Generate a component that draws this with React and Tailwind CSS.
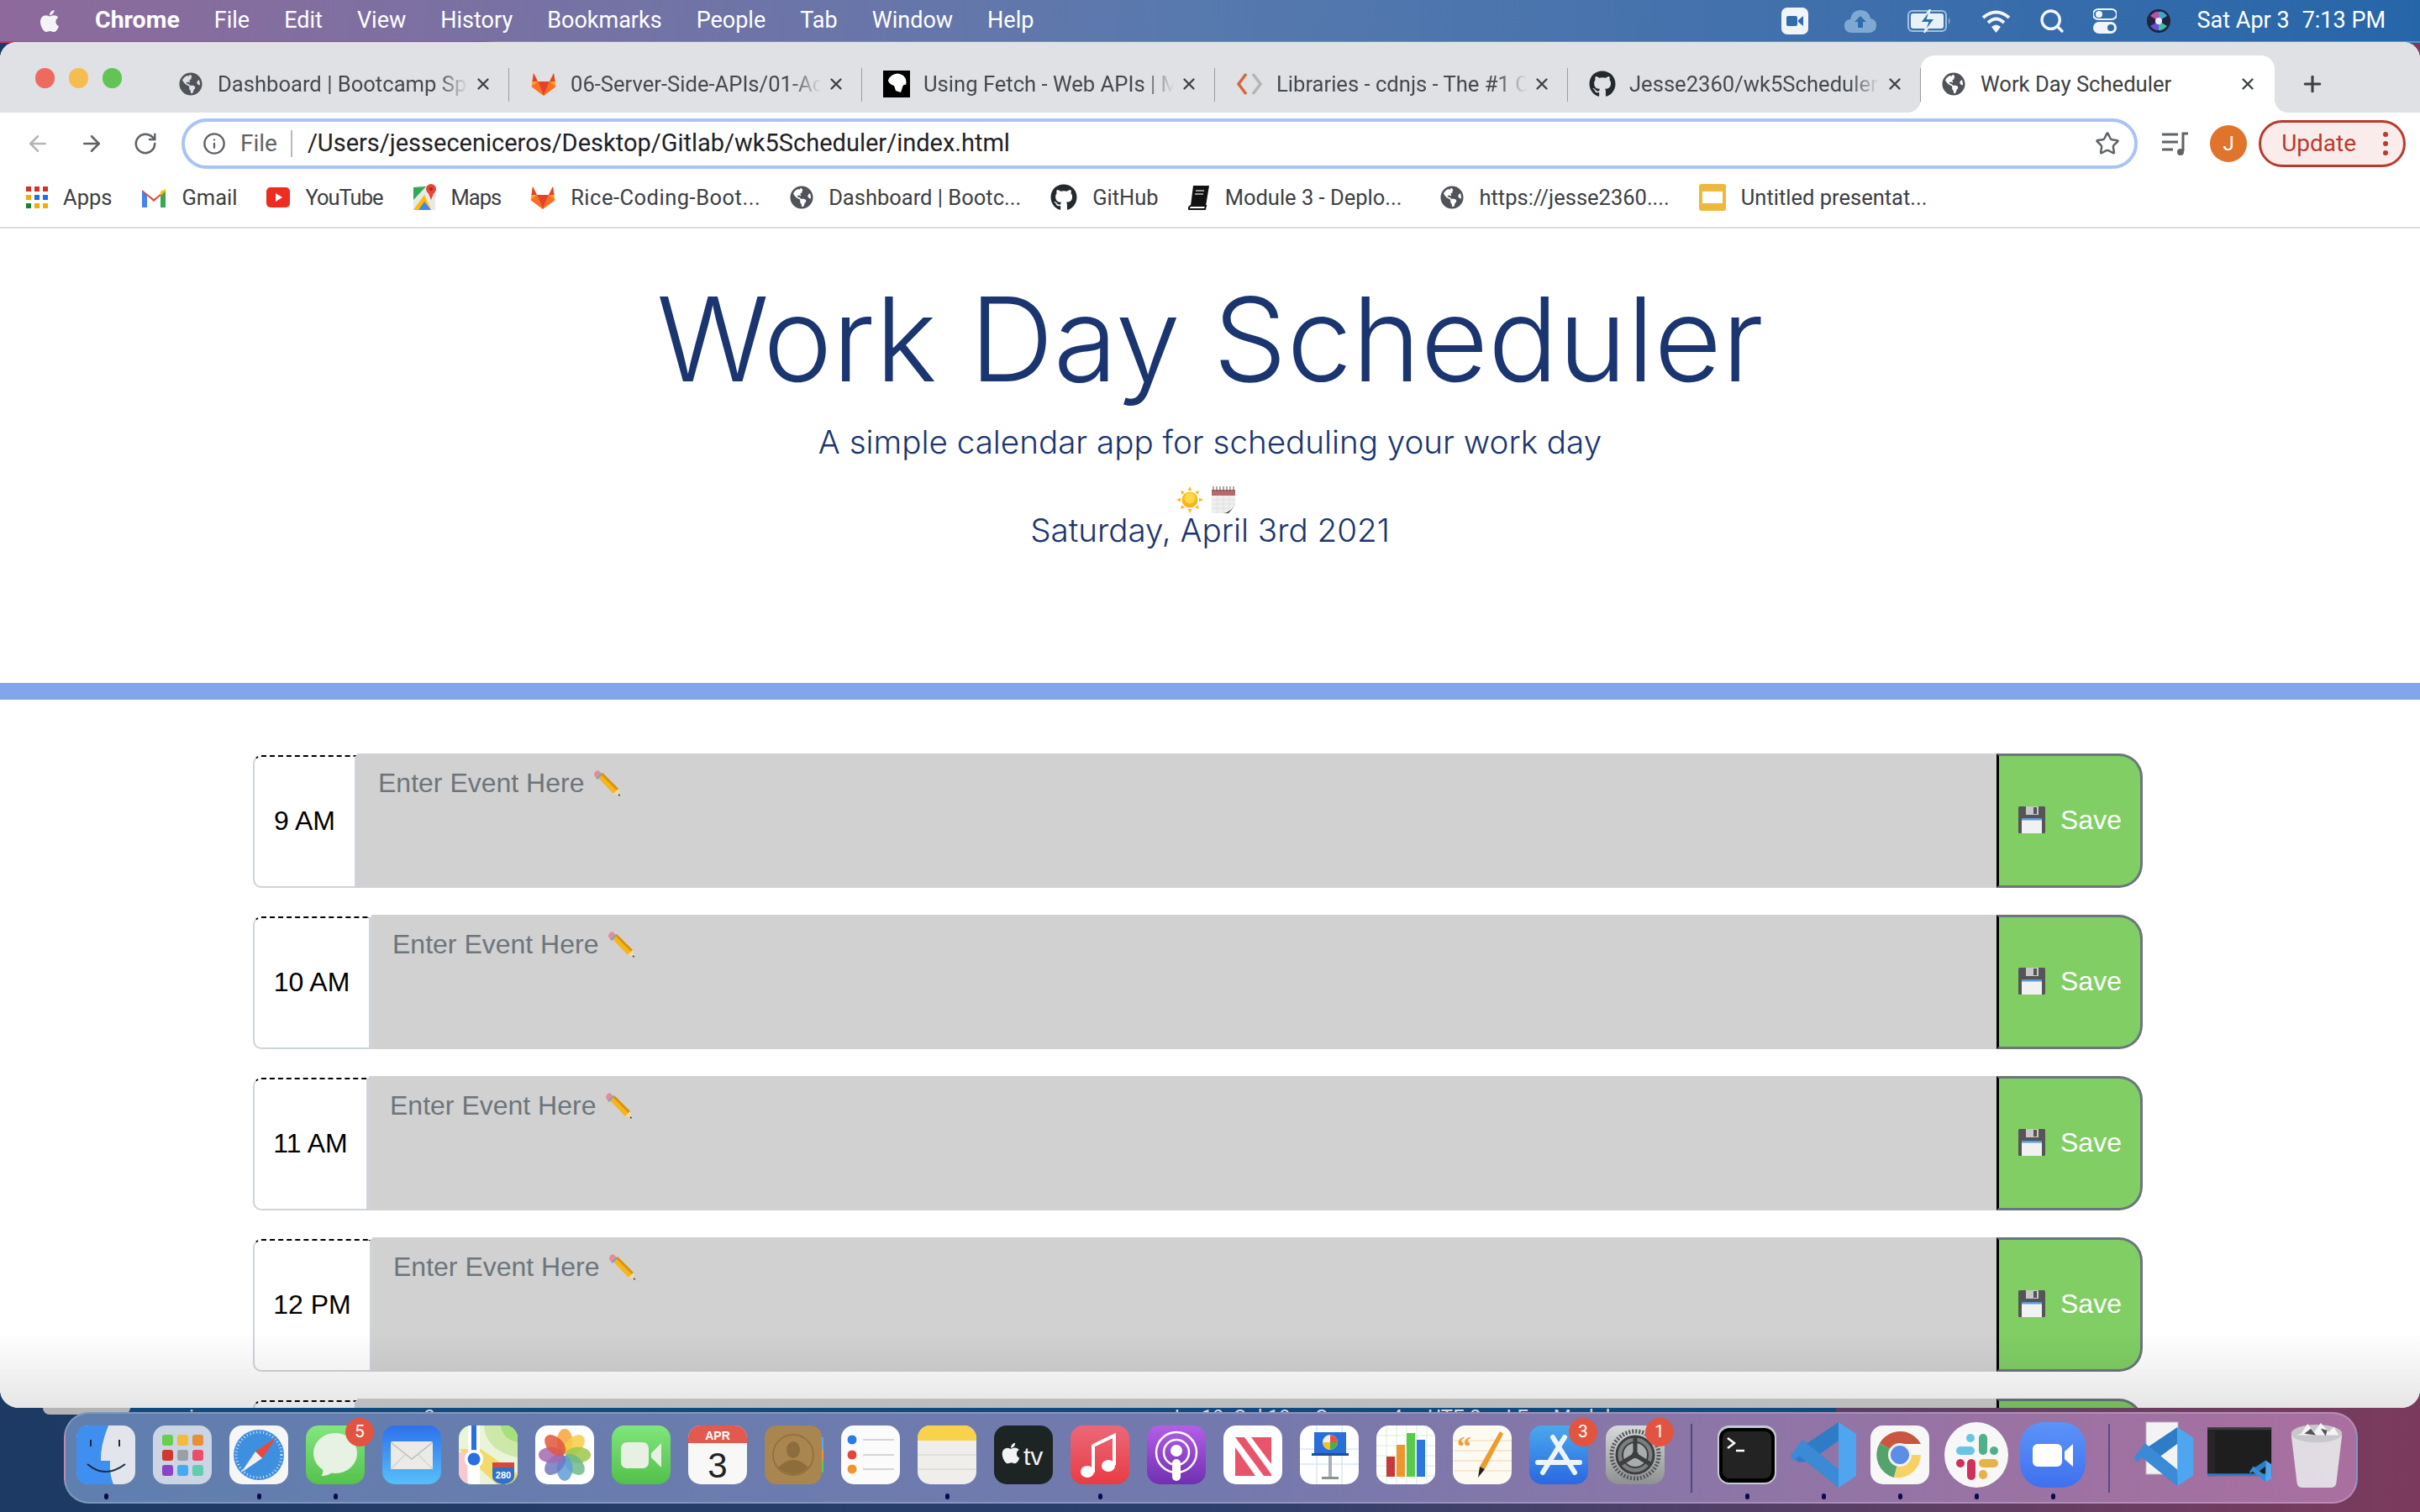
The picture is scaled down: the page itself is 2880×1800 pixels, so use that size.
import React from 'react'
import { FaApple, FaGithub, FaGlobeAmericas } from 'react-icons/fa'
import { ArrowLeft, ArrowRight, RotateCw, Info, Star, X, Plus, Search } from 'lucide-react'

const ui = { fontFamily: 'Roboto, "Liberation Sans", sans-serif' }
const light = { fontFamily: 'Inter, "Liberation Sans", sans-serif', fontWeight: 300 }

/* ================= SMALL ICONS ================= */
function GitlabIcon({ size = 30 }) {
  return (
    <svg width={size} height={size} viewBox="0 0 30 30">
      <path d="M15 29 L0.5 18 L3 2 L8 12 H22 L27 2 L29.5 18 Z" fill="#fca326" />
      <path d="M15 29 L8 12 H22 Z" fill="#e24329" />
      <path d="M15 29 L0.5 18 L8 12 Z M15 29 L29.5 18 L22 12 Z" fill="#fc6d26" />
      <path d="M3 2 L8 12 H1.5 Z M27 2 L22 12 H28.5 Z" fill="#e24329" />
    </svg>
  )
}

function MdnIcon() {
  return (
    <svg width="32" height="32" viewBox="0 0 32 32">
      <rect width="32" height="32" fill="#000" />
      <path d="M10 6 Q17 1 24 6 Q29 11 27 17 Q24 16 23 20 L21 26 L15 24 L13 18 Q7 16 6 12 Q7 8 10 6 Z" fill="#fff" />
    </svg>
  )
}

function CdnjsIcon() {
  return (
    <svg width="32" height="32" viewBox="0 0 32 32" fill="none" strokeWidth="3.5">
      <path d="M12 4 L3 16 L12 28" stroke="#d9673b" />
      <path d="M20 4 L29 16 L20 28" stroke="#b5b5b5" />
    </svg>
  )
}

function GmailIcon() {
  return (
    <svg width="30" height="26" viewBox="0 0 30 26">
      <path d="M1 25 V4 L15 15 L29 4 V25 H23 V11 L15 18 L7 11 V25 Z" fill="#ea4335" />
      <path d="M1 25 V6 L7 11 V25 Z" fill="#4285f4" />
      <path d="M29 25 V6 L23 11 V25 Z" fill="#34a853" />
      <path d="M23 11 L29 6 V3 L23 6 Z" fill="#fbbc04" />
    </svg>
  )
}

function YoutubeIcon() {
  return (
    <svg width="28" height="24" viewBox="0 0 28 24">
      <rect width="28" height="24" rx="5" fill="#ee2c22" />
      <path d="M11 7 L19 12 L11 17 Z" fill="#fff" />
    </svg>
  )
}

function MapsIcon() {
  return (
    <svg width="28" height="34" viewBox="0 0 28 34">
      <path d="M1 5 L20 3 L27 6 V32 L1 32 Z" fill="#e8e8e8" />
      <path d="M1 5 L16 4 L1 20 Z" fill="#34a853" />
      <path d="M1 32 L14 14 L22 32 Z" fill="#fbbc04" />
      <path d="M7 32 L14 22 L22 32 Z" fill="#4285f4" />
      <circle cx="22" cy="7" r="6" fill="#ea4335" />
      <path d="M18 10 L22 20 L26 10 Z" fill="#ea4335" />
      <circle cx="22" cy="7" r="2" fill="#a52714" />
    </svg>
  )
}

function AppsIcon() {
  const colors = ['#d93025', '#d93025', '#d93025', '#f9ab00', '#1a73e8', '#1a73e8', '#188038', '#f9ab00', '#f9ab00']
  return (
    <div className="grid grid-cols-3 gap-[4px] w-[26px]">
      {colors.map((c, i) => (
        <div key={i} className="w-[6px] h-[6px]" style={{ background: c }} />
      ))}
    </div>
  )
}

function BookIcon() {
  return (
    <svg width="26" height="30" viewBox="0 0 26 30">
      <path d="M6 1 H25 L21 25 H3 Z" fill="#111" />
      <path d="M3 25 H21 L20 29 H1 Q0 27 3 25 Z" fill="#fff" stroke="#111" strokeWidth="2" />
      <path d="M9 7 H19 M8 11 H18" stroke="#999" strokeWidth="2" />
    </svg>
  )
}

function SlidesIcon() {
  return (
    <div className="w-[32px] h-[32px] rounded-[3px] bg-[#ecb93c] flex items-center justify-center">
      <div className="w-[24px] h-[14px] bg-white" />
    </div>
  )
}

function PencilEmoji() {
  return (
    <svg width="32" height="31" viewBox="0 0 32 31" className="shrink-0">
      <path d="M5 8 L11 3 L30 22 L24 28 Z" fill="#f4b61a" />
      <path d="M9 5 L11 3 L30 22 L28 24 Z" fill="#d7920f" />
      <path d="M1 6 Q1 1 6 0 L9 3 L3 9 Z" fill="#e98a96" />
      <path d="M3 9 L9 3 L11 5 L5 11 Z" fill="#8aa0b8" />
      <path d="M24 28 L30 22 L32 31 Z" fill="#f0d9b0" />
      <path d="M29.5 29.5 L31 28 L32 31 Z" fill="#222" />
    </svg>
  )
}

function SaveEmoji() {
  return (
    <svg width="32" height="32" viewBox="0 0 32 32" className="shrink-0">
      <rect width="32" height="32" rx="1.5" fill="#555" />
      <rect x="9" y="0" width="15" height="10" fill="#c9c9c9" />
      <rect x="18" y="1" width="4" height="8" fill="#555" />
      <rect x="4" y="14" width="24" height="18" fill="#f0f1f3" />
      <rect x="4" y="14" width="24" height="2.5" fill="#5b9bd8" />
    </svg>
  )
}

function SunEmoji() {
  return (
    <svg width="32" height="32" viewBox="0 0 32 32">
      <g fill="#fbb92d">
        <path d="M16 0 L18.5 5 H13.5 Z M16 32 L18.5 27 H13.5 Z M0 16 L5 13.5 V18.5 Z M32 16 L27 13.5 V18.5 Z" />
        <path d="M5 5 L10 6.5 L6.5 10 Z M27 5 L22 6.5 L25.5 10 Z M5 27 L10 25.5 L6.5 22 Z M27 27 L22 25.5 L25.5 22 Z" />
      </g>
      <circle cx="16" cy="16" r="9.5" fill="#fdb515" />
      <circle cx="16" cy="14" r="6.5" fill="#ffd84a" />
    </svg>
  )
}

function CalendarEmoji() {
  return (
    <svg width="28" height="32" viewBox="0 0 28 32">
      <rect y="4" width="28" height="28" fill="#efefef" />
      <rect y="4" width="28" height="7" fill="#b8686c" />
      <path d="M2 0 V6 M6 0 V6 M10 0 V6 M14 0 V6 M18 0 V6 M22 0 V6 M26 0 V6" stroke="#555" strokeWidth="1" />
      <path d="M0 16 H28 M0 21 H28 M0 26 H28 M7 11 V32 M14 11 V32 M21 11 V32" stroke="#dfdfdf" strokeWidth="1" />
      <path d="M14 32 Q22 28 28 20 V32 Z" fill="#fff" />
      <path d="M14 32 Q24 30 28 20 Q26 26 20 32 Z" fill="#444" />
    </svg>
  )
}

/* ================= MENU BAR ICONS ================= */
function ZoomTray() {
  return (
    <svg width="32" height="32" viewBox="0 0 32 32">
      <rect width="32" height="32" rx="7" fill="#f1f4f8" />
      <rect x="6" y="10" width="13" height="12" rx="2" fill="#2f6cad" />
      <path d="M20 15 L26 10 V22 L20 17 Z" fill="#2f6cad" />
    </svg>
  )
}

function CloudTray() {
  return (
    <svg width="40" height="28" viewBox="0 0 40 28">
      <path d="M9 28 Q0 27 1 18 Q2 12 8 12 Q10 1 20 1 Q30 1 32 11 Q39 12 39 19 Q39 27 31 28 Z" fill="#7fa9d2" />
      <path d="M20 8 L27 15 H23 V22 H17 V15 H13 Z" fill="#2f6cad" />
    </svg>
  )
}

function BatteryTray() {
  return (
    <svg width="52" height="28" viewBox="0 0 52 28" fill="none">
      <rect x="1" y="2" width="45" height="24" rx="5" stroke="#9fc0e0" strokeWidth="2" />
      <rect x="4" y="5" width="39" height="18" rx="3" fill="#e8f0f8" />
      <path d="M49 10 Q52 14 49 18 Z" fill="#9fc0e0" />
      <path d="M27 0 L15 16 H24 L20 28 L33 11 H24 Z" fill="#2f6cad" stroke="#e8f0f8" strokeWidth="2" />
    </svg>
  )
}

function WifiTray() {
  return (
    <svg width="35" height="28" viewBox="0 0 35 28" fill="none" stroke="#f3f6fa" strokeWidth="4">
      <path d="M2 10 Q17.5 -3 33 10" />
      <path d="M8 16 Q17.5 7 27 16" />
      <path d="M17.5 28 L12 21 Q17.5 16 23 21 Z" fill="#f3f6fa" stroke="none" />
    </svg>
  )
}

function ControlTray() {
  return (
    <svg width="28" height="30" viewBox="0 0 28 30">
      <rect x="0" y="1" width="28" height="12" rx="6" fill="none" stroke="#f1f4f8" strokeWidth="2" />
      <circle cx="7" cy="7" r="4" fill="#f1f4f8" />
      <rect x="0" y="16" width="28" height="14" rx="7" fill="#f1f4f8" />
      <circle cx="21" cy="23" r="4" fill="#2f6cad" />
    </svg>
  )
}

function SiriTray() {
  return (
    <svg width="28" height="28" viewBox="0 0 28 28">
      <circle cx="14" cy="14" r="14" fill="#232340" />
      <path d="M14 14 L4 8 Q10 2 14 3 Z" fill="#c04fa8" />
      <path d="M14 14 L24 8 Q20 2 14 3 Z" fill="#38a8c8" />
      <path d="M14 14 L4 20 Q9 26 14 25 Z" fill="#6a4fd0" />
      <path d="M14 14 L24 20 Q19 26 14 25 Z" fill="#38c0a8" />
      <circle cx="14" cy="14" r="4" fill="#f3e8ff" />
    </svg>
  )
}

/* ================= DOCK ICONS ================= */
const Finder = () => (
  <svg viewBox="0 0 70 70" className="w-full h-full">
    <rect width="70" height="70" rx="15" fill="#e2e5ec" />
    <path d="M15 0 H38 Q28 25 29 42 H40 Q39 58 44 70 H15 Q0 70 0 55 V15 Q0 0 15 0 Z" fill="#3f8ff0" />
    <path d="M17 17 V25 M51 17 V25" stroke="#1c2a44" strokeWidth="2" />
    <path d="M13 46 Q34 64 58 46" fill="none" stroke="#1c2a44" strokeWidth="2" />
  </svg>
)

const Launchpad = () => {
  const tiles = [
    ['#67cf4c', '#f2bc3a', '#e98f33'],
    ['#cf3a2a', '#9aa1a6', '#e8506a'],
    ['#8a44c8', '#45aaf0', '#5fcdb0'],
  ]
  return (
    <svg viewBox="0 0 70 70" className="w-full h-full">
      <rect width="70" height="70" rx="15" fill="#ccd5e3" />
      {tiles.map((row, r) =>
        row.map((c, i) => <rect key={`${r}${i}`} x={11 + i * 18} y={11 + r * 18} width="13" height="13" rx="3" fill={c} />)
      )}
    </svg>
  )
}

const Safari = () => (
  <svg viewBox="0 0 70 70" className="w-full h-full">
    <rect width="70" height="70" rx="15" fill="#f6f6f6" />
    <circle cx="35" cy="35" r="30" fill="#3f8fe0" />
    <circle cx="35" cy="35" r="27" fill="none" stroke="#d8e8f8" strokeWidth="3" strokeDasharray="1 3" />
    <path d="M56 14 L31 31 L39 39 Z" fill="#e8493a" />
    <path d="M14 56 L31 31 L39 39 Z" fill="#f1f1f1" />
  </svg>
)

const Messages = () => (
  <svg viewBox="0 0 70 70" className="w-full h-full">
    <defs>
      <linearGradient id="msgBg" x1="0" y1="0" x2="0" y2="1">
        <stop offset="0" stopColor="#83e67f" />
        <stop offset="1" stopColor="#55c24c" />
      </linearGradient>
    </defs>
    <rect width="70" height="70" rx="15" fill="url(#msgBg)" />
    <ellipse cx="35" cy="33" rx="26" ry="24" fill="#e8f2e4" />
    <path d="M20 50 Q21 58 18 60 Q28 60 32 55 Z" fill="#e8f2e4" />
  </svg>
)

const Mail = () => (
  <svg viewBox="0 0 70 70" className="w-full h-full">
    <defs>
      <linearGradient id="mailBg" x1="0" y1="0" x2="0" y2="1">
        <stop offset="0" stopColor="#2f70ec" />
        <stop offset="1" stopColor="#56c0f8" />
      </linearGradient>
    </defs>
    <rect width="70" height="70" rx="15" fill="url(#mailBg)" />
    <rect x="10" y="19" width="50" height="33" rx="2" fill="#eceae6" />
    <path d="M10 20 L35 40 L60 20" fill="none" stroke="#bdbdbd" strokeWidth="1.5" />
    <path d="M10 52 L28 34 M60 52 L42 34" stroke="#cfcfcf" strokeWidth="1.2" />
  </svg>
)

const Maps = () => (
  <svg viewBox="0 0 70 70" className="w-full h-full">
    <defs>
      <clipPath id="mapsClip"><rect width="70" height="70" rx="15" /></clipPath>
    </defs>
    <g clipPath="url(#mapsClip)">
      <rect width="70" height="70" fill="#e9f4d8" />
      <path d="M30 0 Q32 30 70 38 V0 Z" fill="#cde8a8" />
      <path d="M50 0 Q52 16 70 20 V0 Z" fill="#a5e07a" />
      <path d="M0 28 L45 70 H70 V58 L26 28 Z" fill="#f3da6a" />
      <rect x="0" y="32" width="10" height="38" fill="#f6c9cf" />
      <rect x="11" y="0" width="14" height="70" fill="#fff" />
      <rect x="15" y="0" width="6" height="38" fill="#2a6fe0" />
      <circle cx="18" cy="40" r="11" fill="#fff" />
      <circle cx="18" cy="40" r="7.5" fill="#2a6fe0" />
      <path d="M40 44 H66 V60 Q66 68 53 70 Q40 68 40 60 Z" fill="#2f73c8" />
      <rect x="40" y="44" width="26" height="6" fill="#d8473c" />
      <text x="53" y="63" textAnchor="middle" fontSize="11" fontWeight="700" fill="#fff" fontFamily="Liberation Sans, sans-serif">280</text>
    </g>
  </svg>
)

const Photos = () => {
  const petals = ['#f5a33c', '#f4cf44', '#9ec84a', '#6fb98a', '#5f9fd8', '#6f78c0', '#a568b0', '#e0573c']
  return (
    <svg viewBox="0 0 70 70" className="w-full h-full">
      <rect width="70" height="70" rx="15" fill="#fff" />
      {petals.map((c, i) => (
        <ellipse key={i} cx="35" cy="19" rx="9.5" ry="15" fill={c} opacity="0.85" transform={`rotate(${i * 45} 35 35)`} />
      ))}
    </svg>
  )
}

const Facetime = () => (
  <svg viewBox="0 0 70 70" className="w-full h-full">
    <defs>
      <linearGradient id="ftBg" x1="0" y1="0" x2="0" y2="1">
        <stop offset="0" stopColor="#80e67c" />
        <stop offset="1" stopColor="#52c04a" />
      </linearGradient>
    </defs>
    <rect width="70" height="70" rx="15" fill="url(#ftBg)" />
    <rect x="11" y="20" width="33" height="31" rx="7" fill="#e8f0e4" />
    <path d="M47 33 L59 21 V50 L47 38 Z" fill="#e8f0e4" />
  </svg>
)

const CalendarApp = () => (
  <svg viewBox="0 0 70 70" className="w-full h-full">
    <defs>
      <clipPath id="calClip"><rect width="70" height="70" rx="15" /></clipPath>
    </defs>
    <g clipPath="url(#calClip)">
      <rect width="70" height="70" fill="#f8f8f6" />
      <rect width="70" height="21" fill="#e2594f" />
      <text x="35" y="17" textAnchor="middle" fontSize="14" fontWeight="700" fill="#fff" fontFamily="Liberation Sans, sans-serif">APR</text>
      <text x="35" y="62" textAnchor="middle" fontSize="42" fill="#222" fontFamily="Liberation Sans, sans-serif">3</text>
    </g>
  </svg>
)

const Contacts = () => (
  <svg viewBox="0 0 70 70" className="w-full h-full">
    <rect x="60" y="14" width="10" height="14" fill="#5aa8e8" />
    <rect x="60" y="28" width="10" height="14" fill="#e8963c" />
    <rect x="60" y="42" width="10" height="14" fill="#62c458" />
    <rect width="68" height="70" rx="14" fill="#a9854f" />
    <circle cx="34" cy="35" r="24" fill="none" stroke="#8e6d3d" strokeWidth="1.5" />
    <ellipse cx="34" cy="29" rx="8" ry="10" fill="#8e6d3d" />
    <path d="M16 50 Q34 32 52 50 Q34 66 16 50 Z" fill="#8e6d3d" />
  </svg>
)

const Reminders = () => (
  <svg viewBox="0 0 70 70" className="w-full h-full">
    <rect width="70" height="70" rx="15" fill="#fbfbfb" />
    {[['#2a7de8', 17], ['#e2473a', 35], ['#ee9530', 52]].map(([c, y]) => (
      <g key={y}>
        <circle cx="13" cy={y} r="6" fill={c} stroke="#fff" strokeWidth="1" />
        <path d={`M26 ${y} H63`} stroke="#c9c9c9" strokeWidth="1.5" />
      </g>
    ))}
  </svg>
)

const Notes = () => (
  <svg viewBox="0 0 70 70" className="w-full h-full">
    <defs>
      <clipPath id="notesClip"><rect width="70" height="70" rx="15" /></clipPath>
    </defs>
    <g clipPath="url(#notesClip)">
      <rect width="70" height="70" fill="#efeeea" />
      <rect width="70" height="18" fill="#f9d24b" />
      <path d="M0 35 H70 M0 52 H70" stroke="#dcdbd6" strokeWidth="1.5" />
    </g>
  </svg>
)

const AppleTv = () => (
  <svg viewBox="0 0 70 70" className="w-full h-full">
    <rect width="70" height="70" rx="15" fill="#1d2524" />
    <FaApple x="6" y="19" size="28" color="#f3f3f3" />
    <text x="35" y="47" fontSize="30" fill="#f3f3f3" fontFamily="Liberation Sans, sans-serif">tv</text>
  </svg>
)

const MusicApp = () => (
  <svg viewBox="0 0 70 70" className="w-full h-full">
    <defs>
      <linearGradient id="musBg" x1="0" y1="0" x2="0" y2="1">
        <stop offset="0" stopColor="#ec6878" />
        <stop offset="1" stopColor="#e83c44" />
      </linearGradient>
    </defs>
    <rect width="70" height="70" rx="15" fill="url(#musBg)" />
    <path d="M27 24 L52 12 V47" fill="none" stroke="#fff" strokeWidth="4" />
    <path d="M27 23 V56" stroke="#fff" strokeWidth="4" />
    <ellipse cx="20" cy="55" rx="8" ry="7" fill="#fff" />
    <ellipse cx="45" cy="48" rx="8" ry="7" fill="#fff" />
  </svg>
)

const Podcasts = () => (
  <svg viewBox="0 0 70 70" className="w-full h-full">
    <defs>
      <linearGradient id="podBg" x1="0" y1="0" x2="0" y2="1">
        <stop offset="0" stopColor="#b45ee8" />
        <stop offset="1" stopColor="#7030b0" />
      </linearGradient>
    </defs>
    <rect width="70" height="70" rx="15" fill="url(#podBg)" />
    <circle cx="35" cy="32" r="24" fill="none" stroke="#fff" strokeWidth="2.5" />
    <circle cx="35" cy="32" r="15" fill="none" stroke="#fff" strokeWidth="2.5" />
    <circle cx="35" cy="30" r="7" fill="#fff" />
    <rect x="30" y="40" width="10" height="26" rx="5" fill="#fff" />
  </svg>
)

const News = () => (
  <svg viewBox="0 0 70 70" className="w-full h-full">
    <rect width="70" height="70" rx="15" fill="#fff" />
    <path d="M14 14 H25 L57 58 V60 H48 L14 14 Z M14 26 L38 60 H14 Z M33 14 H57 V46 Z" fill="#e8546a" />
  </svg>
)

const Keynote = () => (
  <svg viewBox="0 0 70 70" className="w-full h-full">
    <rect width="70" height="70" rx="15" fill="#fff" />
    <path d="M0 28 H70 M0 46 H70 M20 0 V70 M50 0 V70" stroke="#dbe7f2" strokeWidth="1.5" />
    <rect x="17" y="8" width="38" height="25" fill="#2a6fd8" />
    <circle cx="36" cy="20" r="9" fill="#f0f0f0" />
    <path d="M36 20 V11 A9 9 0 0 1 45 20 Z" fill="#e8543c" />
    <path d="M36 20 H45 A9 9 0 0 1 36 29 Z" fill="#4ab04a" />
    <path d="M36 20 V29 A9 9 0 0 1 27 20 Z" fill="#f0c030" />
    <rect x="14" y="33" width="44" height="3" fill="#1c4fa0" />
    <rect x="34" y="36" width="4" height="26" fill="#aab0b8" />
    <rect x="26" y="61" width="20" height="3" fill="#8a9098" />
  </svg>
)

const Numbers = () => (
  <svg viewBox="0 0 70 70" className="w-full h-full">
    <rect width="70" height="70" rx="15" fill="#fff" />
    <path d="M0 12 H70 M0 24 H70 M0 36 H70 M0 48 H70 M0 60 H70 M12 0 V70 M24 0 V70 M36 0 V70 M48 0 V70 M60 0 V70" stroke="#d8efd0" strokeWidth="1" />
    <rect x="12" y="37" width="10" height="24" fill="#c83a3a" />
    <rect x="24" y="23" width="10" height="38" fill="#ee9530" />
    <rect x="36" y="9" width="10" height="52" fill="#58cc4a" />
    <rect x="48" y="17" width="10" height="44" fill="#2a78e0" />
  </svg>
)

const Pages = () => (
  <svg viewBox="0 0 70 70" className="w-full h-full">
    <rect width="70" height="70" rx="15" fill="#fdfaf2" />
    <path d="M0 18 H70 M0 30 H70 M0 42 H70 M0 54 H70" stroke="#f6e2c8" strokeWidth="1.5" />
    <text x="5" y="36" fontSize="34" fontWeight="700" fill="#e8a040" fontFamily="Liberation Serif, serif">“</text>
    <path d="M56 7 L60 10 L38 52 L32 49 Z" fill="#ee9a2c" />
    <path d="M32 49 L38 52 L30 62 Z" fill="#222" />
  </svg>
)

const AppStore = () => (
  <svg viewBox="0 0 70 70" className="w-full h-full">
    <defs>
      <linearGradient id="asBg" x1="0" y1="0" x2="0" y2="1">
        <stop offset="0" stopColor="#4aa8ee" />
        <stop offset="1" stopColor="#2a68e0" />
      </linearGradient>
    </defs>
    <rect width="70" height="70" rx="15" fill="url(#asBg)" />
    <path d="M28 14 L54 56 M42 14 L16 56 M10 44 H60" stroke="#eef4fc" strokeWidth="6" strokeLinecap="round" />
  </svg>
)

const Settings = () => (
  <svg viewBox="0 0 70 70" className="w-full h-full">
    <defs>
      <linearGradient id="setBg" x1="0" y1="0" x2="0" y2="1">
        <stop offset="0" stopColor="#d6dadb" />
        <stop offset="1" stopColor="#8e9192" />
      </linearGradient>
    </defs>
    <rect width="70" height="70" rx="15" fill="url(#setBg)" />
    <circle cx="35" cy="35" r="28" fill="none" stroke="#555" strokeWidth="5" strokeDasharray="2 2" />
    <circle cx="35" cy="35" r="22" fill="#7b7f80" stroke="#3c3e3f" strokeWidth="3" />
    <circle cx="35" cy="35" r="15" fill="#a9adae" stroke="#3c3e3f" strokeWidth="2" />
    <path d="M35 35 V14 M35 35 L17 46 M35 35 L53 46" stroke="#3c3e3f" strokeWidth="5" />
    <circle cx="35" cy="35" r="4" fill="#3c3e3f" />
  </svg>
)

const Terminal = () => (
  <svg viewBox="0 0 70 70" className="w-full h-full">
    <rect width="70" height="70" rx="14" fill="#c2ccd0" />
    <rect x="2" y="3" width="66" height="65" rx="12" fill="#000" />
    <rect x="6" y="7" width="58" height="56" rx="8" fill="#232323" />
    <path d="M12 15 L20 21 L12 27" fill="none" stroke="#fff" strokeWidth="2.5" />
    <path d="M22 30 H32" stroke="#fff" strokeWidth="2.5" />
  </svg>
)

const VsCode = () => (
  <svg viewBox="0 0 78 78" className="w-full h-full" overflow="visible">
    <path d="M57 0 L78 14 V64 L57 78 Z" fill="#4fa6ee" />
    <path d="M57 0 V22 L24 46 L10 36 Q6 33 2 37 Z M2 37 L0 40 L10 48 L24 46 Z" fill="#2f7cc6" />
    <path d="M57 78 V56 L14 21 L0 40 Q-1 42 4 46 L10 40 L57 78 Z" fill="#3a8ad6" />
  </svg>
)

const ChromeApp = () => (
  <svg viewBox="0 0 70 70" className="w-full h-full">
    <rect width="70" height="70" rx="15" fill="#f7f7f7" />
    <path d="M35 35 L11 21 A28 28 0 0 1 60 22 H35 Z" fill="#c9573f" />
    <path d="M35 35 L11 21 A28 28 0 0 0 28 62 L35 35 Z" fill="#54a36c" />
    <path d="M35 35 H60 A28 28 0 0 1 28 62 Z" fill="#f6d265" />
    <circle cx="35" cy="35" r="14" fill="#f2f2f2" />
    <circle cx="35" cy="35" r="11" fill="#5c8ee8" />
  </svg>
)

const Slack = () => (
  <svg viewBox="0 0 76 78" className="w-full h-full">
    <ellipse cx="38" cy="39" rx="38" ry="39" fill="#f7f7f7" />
    <rect x="26" y="14" width="10" height="10" rx="5" fill="#6ac4e8" />
    <rect x="14" y="29" width="22" height="10" rx="5" fill="#6ac4e8" />
    <rect x="41" y="14" width="10" height="25" rx="5" fill="#4fb08a" />
    <rect x="54" y="29" width="10" height="10" rx="5" fill="#4fb08a" />
    <rect x="14" y="44" width="10" height="10" rx="5" fill="#d0315c" />
    <rect x="27" y="44" width="10" height="25" rx="5" fill="#d0315c" />
    <rect x="41" y="44" width="23" height="10" rx="5" fill="#e6b346" />
    <rect x="41" y="57" width="10" height="11" rx="5" fill="#e6b346" />
  </svg>
)

const ZoomApp = () => (
  <svg viewBox="0 0 78 78" className="w-full h-full">
    <defs>
      <linearGradient id="zmBg" x1="0" y1="0" x2="0" y2="1">
        <stop offset="0" stopColor="#5c94f8" />
        <stop offset="1" stopColor="#3f70f0" />
      </linearGradient>
    </defs>
    <rect width="78" height="78" rx="28" fill="url(#zmBg)" />
    <rect x="15" y="26" width="35" height="27" rx="6" fill="#fff" />
    <path d="M53 35 L63 26 V53 L53 44 Z" fill="#fff" />
  </svg>
)

const VsFolder = () => (
  <svg viewBox="0 0 70 78" className="w-full h-full" overflow="visible">
    <rect x="14" y="0" width="38" height="62" fill="#f3f3f3" stroke="#bbb" />
    <g transform="translate(0 6) scale(0.9)">
      <path d="M57 0 L78 14 V64 L57 78 Z" fill="#4fa6ee" />
      <path d="M57 0 V22 L24 46 L10 36 Q6 33 2 37 Z" fill="#2f7cc6" />
      <path d="M57 78 V56 L14 21 L0 40 Q-1 42 4 46 L10 40 L57 78 Z" fill="#3a8ad6" />
    </g>
  </svg>
)

const TermWindow = () => (
  <svg viewBox="0 0 84 78" className="w-full h-full" overflow="visible">
    <rect y="4" width="82" height="62" fill="#1e1e1e" />
    <rect y="4" width="82" height="3" fill="#3a3a3a" />
    <rect x="0" y="8" width="10" height="58" fill="#262626" />
    <rect y="63" width="82" height="3" fill="#2f7cc6" />
    <g transform="translate(54 46) scale(0.36)">
      <path d="M57 0 L78 14 V64 L57 78 Z" fill="#4fa6ee" />
      <path d="M57 0 V22 L24 46 L10 36 Q6 33 2 37 Z" fill="#2f7cc6" />
      <path d="M57 78 V56 L14 21 L0 40 Q-1 42 4 46 L10 40 L57 78 Z" fill="#3a8ad6" />
    </g>
  </svg>
)

const Trash = () => (
  <svg viewBox="0 0 66 80" className="w-full h-full" overflow="visible">
    <path d="M2 16 H64 L57 74 Q56 80 50 80 H16 Q10 80 9 74 Z" fill="#e8e8ea" opacity="0.9" />
    <ellipse cx="33" cy="14" rx="31" ry="11" fill="#c8c8cc" />
    <path d="M14 14 L22 2 L30 12 L38 1 L48 12 L54 6 L60 16 H8 Z" fill="#f4f4f4" />
    <path d="M18 14 L26 8 L32 16 Z M38 8 L46 10 L44 17 Z" fill="#555" />
  </svg>
)

/* ================= DOCK ================= */
function DockItem({ icon: Icon, dot, badge, big }) {
  return (
    <div className="relative w-[70px] h-[105px] shrink-0 pt-[14px]">
      {big ? (
        <div className="w-[78px] h-[78px] -ml-[4px] -mt-[4px]"><Icon /></div>
      ) : (
        <div className="w-[70px] h-[70px]"><Icon /></div>
      )}
      {badge && (
        <div className="absolute -right-[11px] top-[5px] w-[34px] h-[34px] rounded-full bg-[#e2543f] text-white text-[21px] flex items-center justify-center" style={ui}>
          {badge}
        </div>
      )}
      {dot && <div className="absolute left-[33px] top-[95px] w-[5px] h-[7px] rounded-full bg-[#0a0a50]" />}
    </div>
  )
}

function Dock() {
  return (
    <div className="ml-[76px] w-[2730px] h-[109px] rounded-[30px] border-2 border-white/20 bg-gradient-to-r from-[#5f7fae] via-[#7379ad] to-[#a96f9f] flex pl-[13px] gap-[21px]">
      <DockItem icon={Finder} dot />
      <DockItem icon={Launchpad} />
      <DockItem icon={Safari} dot />
      <DockItem icon={Messages} dot badge="5" />
      <DockItem icon={Mail} />
      <DockItem icon={Maps} />
      <DockItem icon={Photos} />
      <DockItem icon={Facetime} />
      <DockItem icon={CalendarApp} />
      <DockItem icon={Contacts} />
      <DockItem icon={Reminders} />
      <DockItem icon={Notes} dot />
      <DockItem icon={AppleTv} />
      <DockItem icon={MusicApp} dot />
      <DockItem icon={Podcasts} />
      <DockItem icon={News} />
      <DockItem icon={Keynote} />
      <DockItem icon={Numbers} />
      <DockItem icon={Pages} />
      <DockItem icon={AppStore} badge="3" />
      <DockItem icon={Settings} badge="1" />
      <div className="w-[2px] h-[82px] mt-[12px] ml-[10px] mr-[9px] bg-[#4a4a80] shrink-0" />
      <DockItem icon={Terminal} dot />
      <DockItem icon={VsCode} dot big />
      <DockItem icon={ChromeApp} dot />
      <DockItem icon={Slack} dot big />
      <DockItem icon={ZoomApp} dot big />
      <div className="w-[2px] h-[82px] mt-[12px] ml-[10px] mr-[8px] bg-[#5a4a88] shrink-0" />
      <DockItem icon={VsFolder} big />
      <DockItem icon={TermWindow} big />
      <DockItem icon={Trash} big />
    </div>
  )
}

/* ================= BROWSER ================= */
const tabs = [
  { title: 'Dashboard | Bootcamp Spot', icon: <FaGlobeAmericas size={28} color="#50545a" /> },
  { title: '06-Server-Side-APIs/01-Activities', icon: <GitlabIcon /> },
  { title: 'Using Fetch - Web APIs | MDN', icon: <MdnIcon /> },
  { title: 'Libraries - cdnjs - The #1 CDN', icon: <CdnjsIcon /> },
  { title: 'Jesse2360/wk5Scheduler', icon: <FaGithub size={32} color="#24292e" /> },
]

const bookmarks = [
  { title: 'Apps', icon: <AppsIcon /> },
  { title: 'Gmail', icon: <GmailIcon /> },
  { title: 'YouTube', icon: <YoutubeIcon />, text: 'tracking-[-1px]' },
  { title: 'Maps', icon: <MapsIcon />, text: 'tracking-[-1px]' },
  { title: 'Rice-Coding-Boot...', icon: <GitlabIcon />, text: 'tracking-[0.5px]' },
  { title: 'Dashboard | Bootc...', icon: <FaGlobeAmericas size={28} color="#50545a" /> },
  { title: 'GitHub', icon: <FaGithub size={32} color="#24292e" /> },
  { title: 'Module 3 - Deplo...', icon: <BookIcon />, extra: 'mr-[11px]' },
  { title: 'https://jesse2360....', icon: <FaGlobeAmericas size={28} color="#50545a" /> },
  { title: 'Untitled presentat...', icon: <SlidesIcon /> },
]

const menus = ['File', 'Edit', 'View', 'History', 'Bookmarks', 'People', 'Tab', 'Window', 'Help']

function MenuBar() {
  return (
    <div className="h-[49px] flex items-center justify-between pl-[44px] pr-[41px] text-white text-[27px] bg-gradient-to-r from-[#8d6a9b] via-[#5679ae] to-[#2566a9]" style={ui}>
      <div className="flex items-center gap-[41px]">
        <div className="flex items-center gap-[41px]">
          <FaApple size={30} color="#f4f4f8" />
          <span className="font-bold -ml-[2px] text-[28.5px]">Chrome</span>
        </div>
        {menus.map((m) => <span key={m}>{m}</span>)}
      </div>
      <div className="flex items-center gap-[36px]">
        <div className="mr-[6px]"><ZoomTray /></div>
        <CloudTray />
        <BatteryTray />
        <WifiTray />
        <Search size={32} color="#f3f6fa" strokeWidth={2.5} className="-mx-[3px]" />
        <ControlTray />
        <SiriTray />
        <span className="flex gap-[15px] ml-[-4px]"><span>Sat Apr 3</span><span>7:13 PM</span></span>
      </div>
    </div>
  )
}

function TabStrip() {
  return (
    <div className="relative h-[84px] bg-[#dfe1e5] flex items-end pl-[186px]">
      <div className="absolute left-[42px] top-[31px] flex gap-[17px]">
        <div className="w-[23px] h-[24px] rounded-full bg-[#ee6a5f]" />
        <div className="w-[23px] h-[24px] rounded-full bg-[#f5bd4f]" />
        <div className="w-[23px] h-[24px] rounded-full bg-[#61c454]" />
      </div>
      {tabs.map((t) => (
        <div key={t.title} className="w-[420px] h-[68px] flex items-center pl-[25px] relative text-[#45484d] text-[25.6px]" style={ui}>
          <div className="w-[32px] flex justify-center shrink-0">{t.icon}</div>
          <span className="ml-[16px] w-[298px] overflow-hidden whitespace-nowrap [mask-image:linear-gradient(to_right,black_88%,transparent)]">{t.title}</span>
          <X size={22} strokeWidth={2.5} className="ml-[7px] shrink-0 text-[#3c4043]" />
          <div className="absolute right-0 top-[15px] h-[40px] w-[1px] bg-[#9b9ca0]" />
        </div>
      ))}
      <div className="relative w-[421px] h-[68px] bg-white rounded-t-[16px] flex items-center pl-[25px] text-[#3c4043] text-[25.6px]" style={ui}>
        <div className="absolute -left-[16px] bottom-0 w-[16px] h-[16px] bg-[radial-gradient(circle_at_0_0,transparent_16px,white_16px)]" />
        <div className="absolute -right-[16px] bottom-0 w-[16px] h-[16px] bg-[radial-gradient(circle_at_100%_0,transparent_16px,white_16px)]" />
        <div className="w-[28px] flex justify-center shrink-0"><FaGlobeAmericas size={28} color="#50545a" /></div>
        <span className="ml-[18px] w-[300px] whitespace-nowrap">Work Day Scheduler</span>
        <X size={22} strokeWidth={2.5} className="ml-[7px] shrink-0 text-[#3c4043]" />
      </div>
      <Plus size={30} strokeWidth={2.5} color="#3c4043" className="ml-[30px] mb-[19px]" />
    </div>
  )
}

function Toolbar() {
  return (
    <div className="h-[72px] pt-[2px] bg-white flex items-center pl-[30px] pr-[17px]">
      <ArrowLeft size={30} color="#b3b5b9" strokeWidth={2} />
      <ArrowRight size={30} color="#5f6368" strokeWidth={2} className="ml-[34px]" />
      <RotateCw size={30} color="#5f6368" strokeWidth={2} className="ml-[34px]" />
      <div className="ml-[28px] w-[2330px] h-[60px] rounded-full border-[4px] border-[#a9c3f6] flex items-center pl-[21px] pr-[17px] text-[28px]" style={ui}>
        <Info size={28} color="#5f6368" strokeWidth={2} />
        <span className="ml-[17px] text-[#5f6368]">File</span>
        <div className="ml-[16px] w-[2px] h-[32px] bg-[#b8babd]" />
        <span className="ml-[18px] text-[#202124] text-[29px] flex-1">/Users/jesseceniceros/Desktop/Gitlab/wk5Scheduler/index.html</span>
        <Star size={30} color="#5f6368" strokeWidth={2} />
      </div>
      <svg width="32" height="30" viewBox="0 0 32 30" className="ml-[28px]" fill="none" stroke="#5f6368" strokeWidth="3">
        <path d="M1 4 H20 M1 13 H20 M1 22 H14" />
        <path d="M26 24 V3 H32" />
        <circle cx="23" cy="25" r="4" fill="#5f6368" stroke="none" />
      </svg>
      <div className="ml-[26px] w-[44px] h-[44px] rounded-full bg-[#e0742b] text-white text-[24px] flex items-center justify-center" style={ui}>J</div>
      <div className="ml-[14px] w-[175px] h-[56px] rounded-full border-[3px] border-[#b93a2d] bg-[#f9ecea] flex items-center justify-between pl-[24px] pr-[18px] text-[#b93a2d] text-[28px]" style={ui}>
        <span>Update</span>
        <span className="flex flex-col gap-[5px]">
          <span className="w-[6px] h-[6px] rounded-full bg-[#b93a2d]" />
          <span className="w-[6px] h-[6px] rounded-full bg-[#b93a2d]" />
          <span className="w-[6px] h-[6px] rounded-full bg-[#b93a2d]" />
        </span>
      </div>
    </div>
  )
}

function Bookmarks() {
  return (
    <div className="h-[66px] pb-[6px] bg-white border-b-2 border-[#dadce0] flex items-center pl-[31px] gap-[35px] text-[#3c4043] text-[25.5px]" style={ui}>
      {bookmarks.map((b) => (
        <div key={b.title} className={`flex items-center gap-[18px] whitespace-nowrap ${b.extra || ''}`}>
          {b.icon}
          <span className={b.text || ''}>{b.title}</span>
        </div>
      ))}
    </div>
  )
}

/* ================= PAGE ================= */
const hours = [
  { label: '9 AM', width: 'w-[124px]' },
  { label: '10 AM', width: 'w-[141px]' },
  { label: '11 AM', width: 'w-[138px]' },
  { label: '12 PM', width: 'w-[142px]' },
  { label: '1 PM', width: 'w-[124px]' },
]

function TimeRow({ label, width }) {
  return (
    <div className="flex h-[160px]" style={{ fontFamily: '"Liberation Sans", sans-serif' }}>
      <div className={`${width} shrink-0 mt-[2px] pb-[3px] flex items-center justify-center text-black text-[32px] bg-white rounded-l-[10px] border-l-2 border-b-2 border-r-[3px] border-[#ced4da] border-t-2 [border-top-style:dashed] [border-top-color:#000]`}>
        {label}
      </div>
      <div className="flex-1 bg-[#d1d1d1] pl-[25px] pt-[11px] text-[#6c757d] text-[32px]">
        <div className="flex items-center gap-[11px]">
          <span>Enter Event Here</span>
          <PencilEmoji />
        </div>
      </div>
      <button className="w-[174px] shrink-0 pb-[2px] flex items-center gap-[18px] pl-[23px] text-white text-[32px] bg-[#80ce64] border-[3px] border-[#6c757d] border-l-black rounded-r-[28px]">
        <SaveEmoji />
        <span>Save</span>
      </button>
    </div>
  )
}

function Page() {
  return (
    <div className="bg-white" style={{ fontFamily: '"Liberation Sans", sans-serif' }}>
      <header className="h-[541px] flex flex-col items-center text-[#1a3570]">
        <h1 className="mt-[42px] text-[138.7px] leading-[180px]" style={light}>Work Day Scheduler</h1>
        <p className="mt-[2px] text-[38.6px] leading-[60px]" style={light}>A simple calendar app for scheduling your work day</p>
        <div className="mt-[23px] mr-[10px] flex gap-[10px]">
          <SunEmoji />
          <CalendarEmoji />
        </div>
        <p className="text-[38.6px] leading-[40px]" style={light}>Saturday, April 3rd 2021</p>
      </header>
      <div className="h-[20px] bg-[#82a6ea]" />
      <div className="pl-[301px] pr-[330px] pt-[64px] flex flex-col gap-[32px]">
        {hours.map((h) => <TimeRow key={h.label} {...h} />)}
      </div>
    </div>
  )
}

export default function App() {
  return (
    <div className="relative w-[2880px] h-[1800px] overflow-hidden bg-gradient-to-r from-[#1c3a63] via-[#2c3f6c] to-[#7b3a5d]">
      <MenuBar />
      <div className="h-[2px] bg-gradient-to-r from-[#c8395a] via-[#c8395a] via-[20%] to-[#4a9ad0] to-[21%]" />
      {/* editor window peeking out under the browser, behind the dock */}
      <div className="absolute left-[51px] top-[1670px] w-[104px] h-[14px] rounded-b-[8px] bg-[#b4b4b4]" />
      <div className="absolute left-[155px] top-[1676px] w-[2030px] h-[5px] bg-[#0c4a80] overflow-hidden text-[#d0d8e0] text-[24px] leading-[22px] flex" style={ui}>
        <span className="ml-[36px]">main</span>
        <span className="ml-[260px]">0</span>
        <span className="ml-[880px]">Ln 19, Col 10</span>
        <span className="ml-[30px]">Spaces: 4</span>
        <span className="ml-[30px]">UTF-8</span>
        <span className="ml-[30px]">LF</span>
        <span className="ml-[30px]">Markdown</span>
      </div>
      <div className="relative h-[1626px] -mt-[1px] rounded-t-[20px] rounded-b-[22px] overflow-hidden bg-white">
        <TabStrip />
        <Toolbar />
        <Bookmarks />
        <Page />
        <div className="absolute left-0 right-0 bottom-0 h-[90px] bg-gradient-to-b from-black/0 to-black/10" />
      </div>
      <div className="mt-[5px] relative">
        <Dock />
      </div>
    </div>
  )
}
